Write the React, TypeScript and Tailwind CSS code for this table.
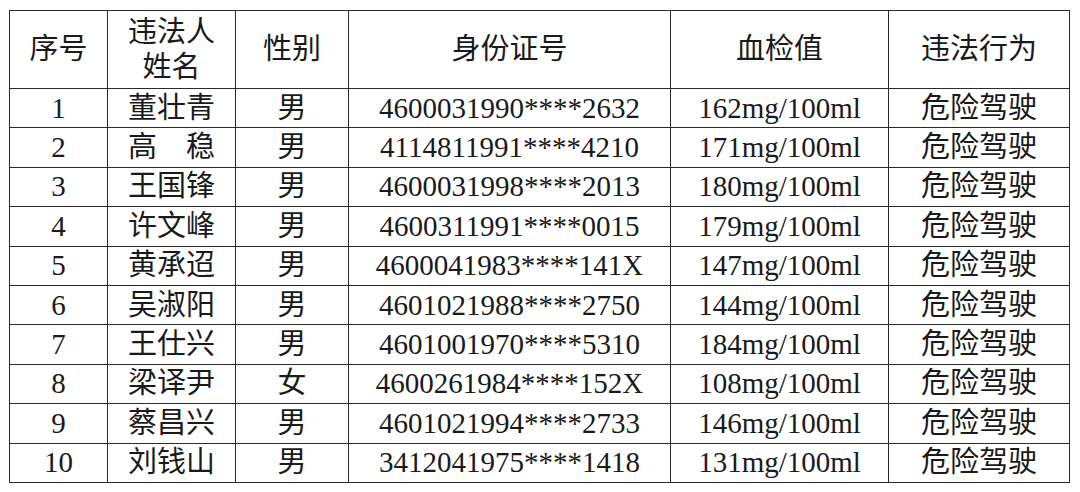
import React from "react";

const rows = [
    { no: "1", name: "董壮青", sex: "男", id: "4600031990****2632", blood: "162mg/100ml" },
    { no: "2", name: "高　稳", sex: "男", id: "4114811991****4210", blood: "171mg/100ml" },
    { no: "3", name: "王国锋", sex: "男", id: "4600031998****2013", blood: "180mg/100ml" },
    { no: "4", name: "许文峰", sex: "男", id: "4600311991****0015", blood: "179mg/100ml" },
    { no: "5", name: "黄承迢", sex: "男", id: "4600041983****141X", blood: "147mg/100ml" },
    { no: "6", name: "吴淑阳", sex: "男", id: "4601021988****2750", blood: "144mg/100ml" },
    { no: "7", name: "王仕兴", sex: "男", id: "4601001970****5310", blood: "184mg/100ml" },
    { no: "8", name: "梁译尹", sex: "女", id: "4600261984****152X", blood: "108mg/100ml" },
    { no: "9", name: "蔡昌兴", sex: "男", id: "4601021994****2733", blood: "146mg/100ml" },
    { no: "10", name: "刘钱山", sex: "男", id: "3412041975****1418", blood: "131mg/100ml" },
];

const App: React.FC = () => {
    const cell = "border border-[#2a2a2a] text-center align-middle p-0 font-normal";

    return (
        <div
            className="w-[1080px] h-[492px] bg-white pt-[10px] pl-[9px] text-[#1a1a1a] overflow-hidden"
            style={{ fontFamily: '"Liberation Serif", "Noto Sans CJK SC", serif' }}
        >
            <table className="table-fixed border-collapse w-[1060px] text-[29px] leading-none">
                <colgroup>
                    <col className="w-[98px]" />
                    <col className="w-[128px]" />
                    <col className="w-[113px]" />
                    <col className="w-[322px]" />
                    <col className="w-[218px]" />
                    <col className="w-[181px]" />
                </colgroup>
                <thead>
                    <tr className="h-[78px]">
                        <th className={cell}>序号</th>
                        <th className={`${cell} leading-[35px]`}>
                            违法人
                            <br />
                            姓名
                        </th>
                        <th className={cell}>性别</th>
                        <th className={cell}>身份证号</th>
                        <th className={cell}>血检值</th>
                        <th className={cell}>违法行为</th>
                    </tr>
                </thead>
                <tbody>
                    {rows.map((r) => (
                        <tr key={r.no} className="h-[39.4px]">
                            <td className={cell}>{r.no}</td>
                            <td className={cell}>{r.name}</td>
                            <td className={cell}>{r.sex}</td>
                            <td className={cell}>{r.id}</td>
                            <td className={cell}>{r.blood}</td>
                            <td className={cell}>危险驾驶</td>
                        </tr>
                    ))}
                </tbody>
            </table>
        </div>
    );
};

export default App;
